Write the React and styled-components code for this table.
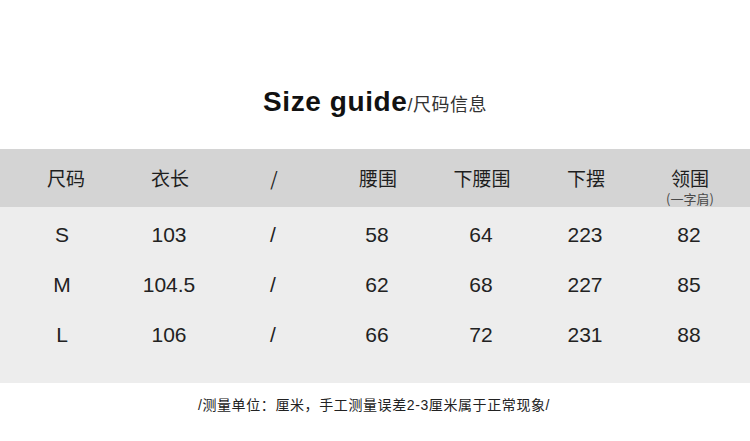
import React from "react";
import styled, { createGlobalStyle } from "styled-components";

const Global = createGlobalStyle`
  html, body { margin: 0; padding: 0; background: #fff; }
  body { font-family: "Liberation Sans", Arial, "Noto Sans CJK SC", sans-serif; color: #222; }
`;

const Page = styled.div`
  width: 750px;
  height: 441px;
  overflow: hidden;
  background: #fff;
`;

const TitleRow = styled.div`
  display: flex;
  justify-content: center;
  align-items: baseline;
  padding-top: 84px;
  height: 36px;
  margin-bottom: 29px;
  line-height: 36px;
  padding-left: 0px;
`;

const TitleMain = styled.span`
  font-family: "Liberation Sans", Arial, sans-serif;
  font-weight: 700;
  font-size: 28px;
  letter-spacing: 0.6px;
  color: #111;
`;

const TitleSub = styled.span`
  font-family: "Liberation Sans", "Noto Sans CJK SC", sans-serif;
  font-size: 18px;
  letter-spacing: 0.5px;
  color: #333;
`;

const Grid = styled.div`
  display: grid;
  grid-template-columns: repeat(7, 104px);
  padding-left: 14px;
  align-items: center;
  justify-items: center;
`;

const HeadBand = styled(Grid)`
  height: 58px;
  background: #d4d4d4;
`;

const HeadCell = styled.div`
  display: flex;
  flex-direction: column;
  align-items: center;
  padding-top: ${(p) => (p.$withSub ? "17px" : "0")};
  font-family: "Noto Sans CJK SC", sans-serif;
  font-size: 19px;
  line-height: 22px;
  color: #1e1e1e;
`;

const HeadSub = styled.span`
  margin-top: 2px;
  font-family: "Noto Sans CJK SC", sans-serif;
  font-size: 13px;
  line-height: 15px;
  color: #4a4a4a;
`;

const Body = styled.div`
  background: #ededed;
  padding: 3px 0 23px;
`;

const Row = styled(Grid)`
  height: 50px;
`;

const Cell = styled.div`
  font-family: "Liberation Sans", Arial, sans-serif;
  font-size: 21px;
  color: #222;
  margin-left: ${(p) => (p.$first ? "-8px" : "-2px")};
`;

const Footer = styled.div`
  text-align: center;
  padding-top: 13px;
  padding-right: 2px;
  font-family: "Liberation Sans", "Noto Sans CJK SC", sans-serif;
  font-size: 14px;
  letter-spacing: 0.6px;
  line-height: 18px;
  color: #222;
`;

const heads = ["尺码", "衣长", "/", "腰围", "下腰围", "下摆", "领围"];
const rows = [
  ["S", "103", "/", "58", "64", "223", "82"],
  ["M", "104.5", "/", "62", "68", "227", "85"],
  ["L", "106", "/", "66", "72", "231", "88"],
];

export default function App() {
  return (
    <Page>
      <Global />
      <TitleRow>
        <TitleMain>Size guide</TitleMain>
        <TitleSub>/尺码信息</TitleSub>
      </TitleRow>
      <HeadBand>
        {heads.map((h, i) =>
          i === 6 ? (
            <HeadCell key={i} $withSub>
              {h}
              <HeadSub>(一字肩)</HeadSub>
            </HeadCell>
          ) : (
            <HeadCell key={i}>{h}</HeadCell>
          )
        )}
      </HeadBand>
      <Body>
        {rows.map((r, ri) => (
          <Row key={ri}>
            {r.map((v, ci) => (
              <Cell key={ci} $first={ci === 0}>
                {v}
              </Cell>
            ))}
          </Row>
        ))}
      </Body>
      <Footer>/测量单位：厘米，手工测量误差2-3厘米属于正常现象/</Footer>
    </Page>
  );
}
